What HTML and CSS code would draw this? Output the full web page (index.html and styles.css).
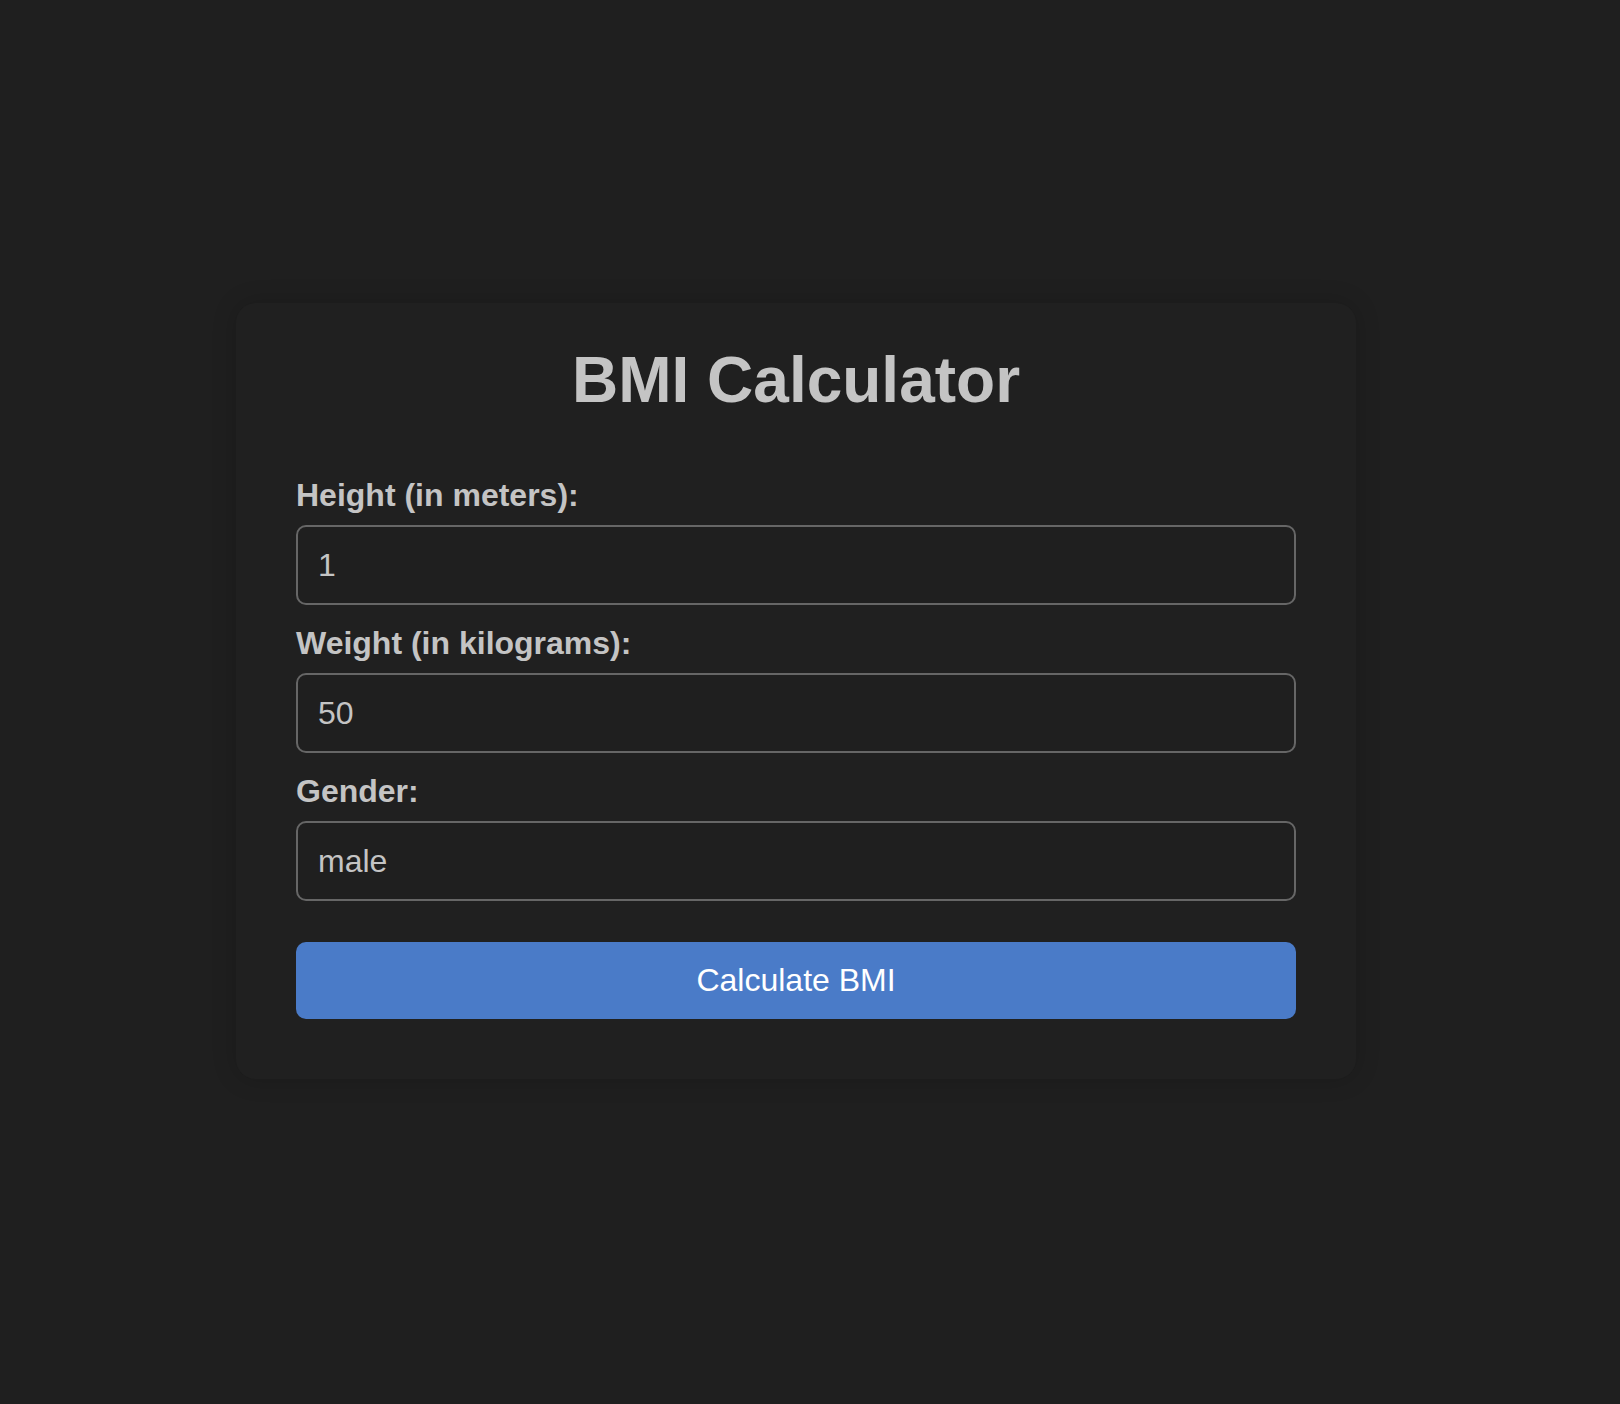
FILE: index.html
```html
<!DOCTYPE html>
<html lang="en">
<head>
<meta charset="utf-8">
<title>BMI Calculator</title>
<link rel="stylesheet" href="styles.css">
</head>
<body>
  <main class="card">
    <h1 class="title">BMI Calculator</h1>
    <form class="form">
      <label class="label" for="height">Height (in meters):</label>
      <input class="field" id="height" type="text" value="1">
      <label class="label" for="weight">Weight (in kilograms):</label>
      <input class="field" id="weight" type="text" value="50">
      <label class="label" for="gender">Gender:</label>
      <input class="field field-last" id="gender" type="text" value="male">
      <button class="btn" type="button">Calculate BMI</button>
    </form>
  </main>
</body>
</html>
```
FILE: styles.css
```css
html, body {
  margin: 0;
  padding: 0;
  background: #1f1f1f;
}
body {
  min-height: 1404px;
  box-sizing: border-box;
  padding: 303px 28px 0 0;
  font-family: "Liberation Sans", Arial, sans-serif;
  color: #c4c4c4;
}
.card {
  box-sizing: border-box;
  width: 1120px;
  margin: 0 auto;
  padding: 40px 60px 60px;
  background: #202020;
  border-radius: 20px;
  box-shadow: 0 0 24px rgba(0, 0, 0, 0.18);
}
.title {
  margin: 0 0 60px;
  font-size: 64px;
  font-weight: bold;
  text-align: center;
  line-height: normal;
  color: #c4c4c4;
}
.form {
  display: flex;
  flex-direction: column;
}
.label {
  display: block;
  font-size: 32px;
  font-weight: bold;
  line-height: normal;
  margin-bottom: 11px;
  color: #c4c4c4;
}
.field {
  box-sizing: border-box;
  width: 100%;
  height: 80px;
  margin: 0 0 20px;
  padding: 0 20px;
  border: 2px solid #666666;
  border-radius: 10px;
  background: #1f1f1f;
  color: #c4c4c4;
  font-family: "Liberation Sans", Arial, sans-serif;
  font-size: 32px;
  outline: none;
}
.field-last {
  margin-bottom: 41px;
}
.btn {
  box-sizing: border-box;
  width: 100%;
  height: 77px;
  padding: 0;
  border: none;
  border-radius: 10px;
  background: #4a7bc8;
  color: #ffffff;
  font-family: "Liberation Sans", Arial, sans-serif;
  font-size: 32px;
  cursor: pointer;
}
```
